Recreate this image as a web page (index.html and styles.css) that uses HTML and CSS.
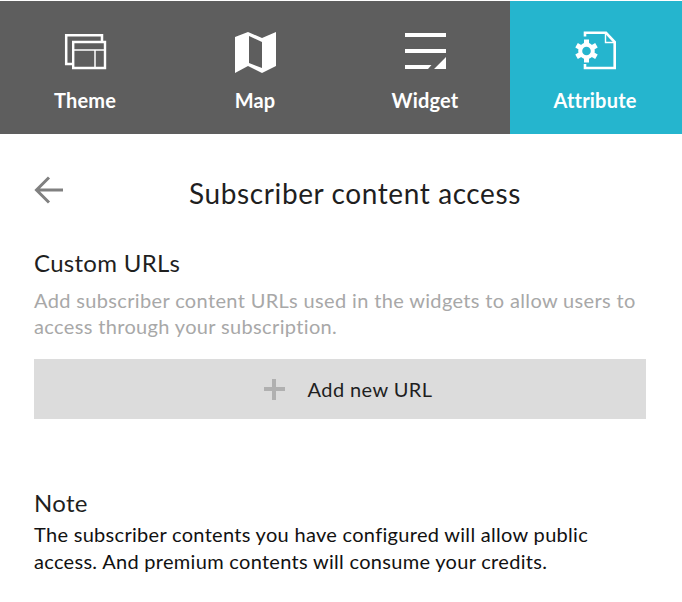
FILE: index.html
```html
<!DOCTYPE html>
<html lang="en">

<head>
    <meta charset="UTF-8">
    <title>Subscriber content access</title>
    <link rel="stylesheet" href="styles.css">
</head>

<body>
    <ul class="tabs">
        <li class="tab">
            <svg class="tab-icon" viewBox="0 0 44 44">
                <path d="M9 33H3.2V4.2H39V10" fill="none" stroke="#fff" stroke-width="2.5" />
                <path d="M10.2 11H42V37H10.2Z" fill="none" stroke="#fff" stroke-width="2.4" />
                <path d="M10 19H42M32 19V37" fill="none" stroke="#fff" stroke-width="1.5" />
            </svg>
            <span>Theme</span>
        </li>
        <li class="tab">
            <svg class="tab-icon" viewBox="0 0 44 44">
                <path fill-rule="evenodd" d="M2 6L15 1L29 7L43 1V35L29 42L15 35L2 42ZM16 5V32L29 37V11Z" fill="#fff" />
            </svg>
            <span>Map</span>
        </li>
        <li class="tab">
            <svg class="tab-icon" viewBox="0 0 44 44">
                <path d="M2 2H43V6H2ZM2 18H43V22H2ZM2 34H28.5L25 38H2ZM43 26V38H31Z" fill="#fff" />
            </svg>
            <span>Widget</span>
        </li>
        <li class="tab active">
            <svg class="tab-icon" viewBox="0 0 44 44">
                <path d="M12 5.5V1.8H33L41.7 11V37H12V33" fill="none" stroke="#fff" stroke-width="2.6" />
                <path d="M32.5 2V11.5H42" fill="none" stroke="#fff" stroke-width="1.4" />
                <circle cx="13.5" cy="20" r="6.3" fill="none" stroke="#fff" stroke-width="4" />
                <g fill="#fff">
                    <rect x="11" y="8.5" width="5" height="5" />
                    <rect x="11" y="8.5" width="5" height="5" transform="rotate(60 13.5 20)" />
                    <rect x="11" y="8.5" width="5" height="5" transform="rotate(120 13.5 20)" />
                    <rect x="11" y="8.5" width="5" height="5" transform="rotate(180 13.5 20)" />
                    <rect x="11" y="8.5" width="5" height="5" transform="rotate(240 13.5 20)" />
                    <rect x="11" y="8.5" width="5" height="5" transform="rotate(300 13.5 20)" />
                </g>
            </svg>
            <span>Attribute</span>
        </li>
    </ul>

    <div class="panel">
        <div class="panel-head">
            <svg class="back" viewBox="0 0 30 28">
                <path d="M15 1.5L2.5 14L15 26.5M2.5 14H29" fill="none" stroke="#808080" stroke-width="3" />
            </svg>
            <h1>Subscriber content access</h1>
        </div>

        <h2>Custom URLs</h2>
        <p class="hint">Add subscriber content URLs used in the widgets to allow users to access through your subscription.</p>
        <div class="add-btn">
            <span class="plus"></span>
            <span>Add new URL</span>
        </div>

        <h2 class="note-title">Note</h2>
        <p class="note">The subscriber contents you have configured will allow public access. And premium contents will consume your credits.</p>
    </div>
</body>

</html>
```

FILE: styles.css
```css
* {
    margin: 0;
    padding: 0;
    box-sizing: border-box;
}

li {
    list-style: none;
}

body {
    background-color: #fff;
    color: #1f1f1f;
    font-family: "Lato", "Noto Sans", sans-serif;
    padding-top: 1px;
}

.tabs {
    display: flex;
    height: 133px;
    background-color: #5e5e5e;
}

.tab {
    width: 170px;
    display: flex;
    flex-direction: column;
    align-items: center;
    padding-top: 30px;
    color: #fff;
    font-size: 20px;
    font-weight: 700;
    line-height: 26px;
    letter-spacing: 0.2px;
}

.tab.active {
    flex: 1;
    padding-right: 2px;
    background-color: #25b5ce;
}

.tab-icon {
    width: 44px;
    height: 44px;
    margin-bottom: 12px;
}

.panel {
    padding: 0 36px 0 34px;
}

.panel-head {
    display: flex;
    align-items: center;
    height: 36px;
    margin-top: 41px;
}

.back {
    width: 30px;
    height: 28px;
    margin-bottom: 7px;
}

h1 {
    flex: 1;
    text-align: center;
    font-size: 28px;
    font-weight: 400;
    line-height: 36px;
    letter-spacing: 0.6px;
}

h2 {
    margin-top: 37px;
    font-size: 24px;
    font-weight: 400;
    line-height: 30px;
    letter-spacing: 0.3px;
}

.hint {
    margin-top: 9px;
    color: #a8a8a8;
    font-size: 20px;
    line-height: 26px;
    letter-spacing: 0.35px;
}

.add-btn {
    display: flex;
    align-items: center;
    justify-content: center;
    gap: 23px;
    height: 60px;
    margin-top: 20px;
    padding-left: 16px;
    background-color: #dcdcdc;
    font-size: 20px;
    letter-spacing: 0.4px;
}

.plus {
    width: 21px;
    height: 21px;
    background: linear-gradient(#b0b0b0, #b0b0b0) center / 100% 4px no-repeat,
        linear-gradient(#b0b0b0, #b0b0b0) center / 4px 100% no-repeat;
}

.note-title {
    margin-top: 69px;
}

.note {
    margin-top: 3px;
    color: #111;
    font-size: 20px;
    line-height: 27px;
    letter-spacing: 0.3px;
}
```
